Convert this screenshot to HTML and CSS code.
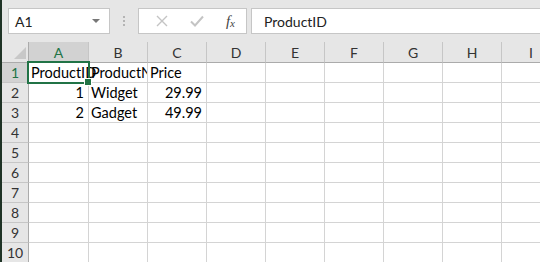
FILE: index.html
```html
<!DOCTYPE html>
<html lang="en">
<head>
  <meta charset="UTF-8">
  <title>Sheet</title>
  <link rel="stylesheet" href="styles.css">
</head>
<body>
  <div class="app">
    <div class="formula_bar">
      <div class="name_box">
        <span>A1</span>
        <svg class="arrow" width="8" height="5" viewBox="0 0 8 5"><path d="M0 0h8L4 4z" fill="#777"/></svg>
      </div>
      <div class="dots"><i></i><i></i><i></i></div>
      <div class="fx_btns">
        <svg width="12" height="12" viewBox="0 0 12 12"><path d="M1 1l10 10M11 1L1 11" stroke="#c4c4c4" stroke-width="1.4" fill="none"/></svg>
        <svg width="14" height="12" viewBox="0 0 14 12"><path d="M1 6.5l4 4L13 1.5" stroke="#c4c4c4" stroke-width="2" fill="none"/></svg>
        <span class="fx">f<sub>x</sub></span>
      </div>
      <div class="formula_input">ProductID</div>
    </div>

    <div class="sheet">
      <div class="corner"><svg width="12" height="12" viewBox="0 0 12 12"><path d="M12 0v12H0z" fill="#c8c8c8"/></svg></div>
      <div class="col_head active">A</div>
      <div class="col_head">B</div>
      <div class="col_head">C</div>
      <div class="col_head">D</div>
      <div class="col_head">E</div>
      <div class="col_head">F</div>
      <div class="col_head">G</div>
      <div class="col_head">H</div>
      <div class="col_head">I</div>

      <div class="row_head active">1</div>
      <div class="cell selected">ProductID</div>
      <div class="cell">ProductName</div>
      <div class="cell">Price</div>
      <div class="cell"></div><div class="cell"></div><div class="cell"></div><div class="cell"></div><div class="cell"></div><div class="cell"></div>

      <div class="row_head">2</div>
      <div class="cell num">1</div>
      <div class="cell">Widget</div>
      <div class="cell num">29.99</div>
      <div class="cell"></div><div class="cell"></div><div class="cell"></div><div class="cell"></div><div class="cell"></div><div class="cell"></div>

      <div class="row_head">3</div>
      <div class="cell num">2</div>
      <div class="cell">Gadget</div>
      <div class="cell num">49.99</div>
      <div class="cell"></div><div class="cell"></div><div class="cell"></div><div class="cell"></div><div class="cell"></div><div class="cell"></div>
    </div>
  </div>
  <script>
  // empty rows 4-10
  var sheet = document.querySelector('.sheet');
  for (var r = 4; r <= 10; r++) {
    var head = document.createElement('div');
    head.className = 'row_head';
    head.textContent = r;
    sheet.appendChild(head);
    for (var c = 0; c < 9; c++) {
      var cell = document.createElement('div');
      cell.className = 'cell';
      sheet.appendChild(cell);
    }
  }
  </script>
</body>
</html>
```

FILE: styles.css
```css
:root {
  --green: #217346;
  --grid: #d4d4d4;
  --head_bg: #e6e6e6;
}

* {
  box-sizing: border-box;
  font-family: Lato, "Liberation Sans", sans-serif;
  color: #222;
}

body {
  margin: 0;
  background: #fff;
  overflow: hidden;
}

.app {
  height: 262px;
  border-left: 2px solid #1f3326;
}

.formula_bar {
  display: flex;
  align-items: center;
  height: 42px;
  padding: 0 0 0 6px;
  background: var(--head_bg);
}

.name_box {
  display: flex;
  align-items: center;
  justify-content: space-between;
  width: 102px;
  height: 26px;
  padding: 0 9px 0 6px;
  border: 1px solid #c6c6c6;
  background: #fff;
  font-size: 14px;
}

.dots {
  display: flex;
  flex-direction: column;
  gap: 2px;
  margin: 0 13px 0 13px;
}

.dots i {
  display: block;
  width: 2px;
  height: 2px;
  background: #b4b4b4;
}

.fx_btns {
  display: flex;
  align-items: center;
  justify-content: space-around;
  width: 109px;
  height: 26px;
  padding: 0 0 0 6px;
  border: 1px solid #c6c6c6;
  background: #fff;
}

.fx {
  font-family: "Liberation Serif", serif;
  font-style: italic;
  font-size: 15px;
  color: #444;
}

.fx sub {
  font-family: "Liberation Serif", serif;
  font-size: 11px;
  color: #444;
  vertical-align: -1px;
}

.formula_input {
  flex: 1;
  height: 26px;
  margin-left: 4px;
  padding: 4px 12px;
  border: 1px solid #c6c6c6;
  border-right: 0;
  background: #fff;
  font-size: 14px;
}

.sheet {
  display: grid;
  grid-template-columns: 27px 60px repeat(8, 59px);
  grid-template-rows: 21px repeat(10, 20px);
}

.corner {
  display: flex;
  align-items: flex-end;
  justify-content: flex-end;
  padding: 0 2px 3px 0;
  background: var(--head_bg);
  border-right: 1px solid #ababab;
  border-bottom: 1px solid #ababab;
}

.col_head {
  padding-top: 1px;
  background: var(--head_bg);
  border-right: 1px solid #c6c6c6;
  border-bottom: 1px solid #ababab;
  font-size: 14px;
  line-height: 20px;
  text-align: center;
  color: #333;
}

.row_head {
  background: var(--head_bg);
  border-right: 1px solid #ababab;
  border-bottom: 1px solid #c6c6c6;
  font-size: 14px;
  line-height: 19px;
  text-align: center;
  color: #333;
}

.col_head.active,
.row_head.active {
  background: #d2d2d2;
  color: var(--green);
}

.col_head.active {
  border-bottom: 2px solid var(--green);
}

.cell {
  overflow: hidden;
  white-space: nowrap;
  padding: 0 2px 0 2px;
  border-right: 1px solid var(--grid);
  border-bottom: 1px solid var(--grid);
  font-size: 14.5px;
  line-height: 20px;
  color: #000;
}

.cell.num {
  text-align: right;
  padding-right: 4px;
}

.cell.selected {
  position: relative;
  overflow: visible;
}

.cell.selected::before {
  content: "";
  position: absolute;
  left: -2px;
  top: -2px;
  right: -2px;
  bottom: -2px;
  border: 2px solid var(--green);
}

.cell.selected::after {
  content: "";
  position: absolute;
  right: -4px;
  bottom: -4px;
  width: 6px;
  height: 6px;
  background: var(--green);
  border: 1px solid #fff;
}
```
